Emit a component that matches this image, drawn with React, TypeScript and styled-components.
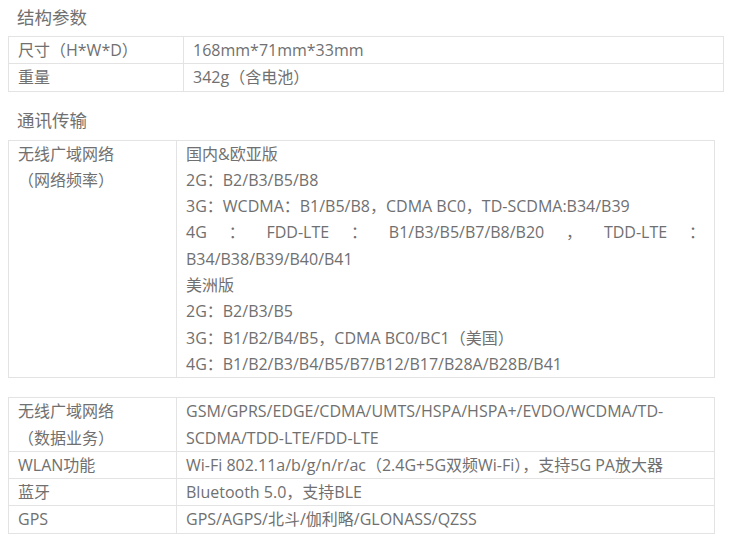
import React from "react";
import styled, { createGlobalStyle } from "styled-components";

const Global = createGlobalStyle`
  html, body { margin: 0; padding: 0; background: #fff; }
  body {
    font-family: "Open Sans", "Noto Sans CJK SC", sans-serif;
    color: #707070;
  }
`;

const Page = styled.div`
  padding: 0 8px 12px 8px;
`;

const SectionTitle = styled.h2<{ $top?: number; $bottom?: number }>`
  margin: ${(p) => p.$top ?? 0}px 0 ${(p) => p.$bottom ?? 0}px 0;
  padding-left: 9px;
  height: 36px;
  line-height: 35px;
  font-size: 17.5px;
  font-weight: 400;
  color: #707070;
`;

const Table = styled.table<{ $width: number; $gap?: number }>`
  width: ${(p) => p.$width}px;
  border-collapse: collapse;
  table-layout: fixed;
  margin-bottom: ${(p) => p.$gap ?? 0}px;
  font-size: 16px;
  line-height: 26.3px;
  color: #707070;
`;

/* $width is the full column width (border to border); padding 9+9 and
   the collapsed border are taken off to get the content width. */
const LabelCell = styled.td<{ $width: number }>`
  width: ${(p) => p.$width - 19}px;
  border: 1px solid #e3e3e3;
  padding: 0 9px;
  vertical-align: top;
  white-space: pre-line;
`;

const ValueCell = styled.td`
  border: 1px solid #e3e3e3;
  padding: 0 9px;
  vertical-align: top;
`;

const Line = styled.div`
  text-align: justify;
`;

export default function App() {
  return (
    <>
      <Global />
      <Page>
        <SectionTitle>结构参数</SectionTitle>
        <Table $width={716}>
          <tbody>
            <tr>
              <LabelCell $width={175}>尺寸（H*W*D）</LabelCell>
              <ValueCell>168mm*71mm*33mm</ValueCell>
            </tr>
            <tr>
              <LabelCell $width={175}>重量</LabelCell>
              <ValueCell>342g（含电池）</ValueCell>
            </tr>
          </tbody>
        </Table>

        <SectionTitle $top={11} $bottom={1}>通讯传输</SectionTitle>
        <Table $width={707} $gap={19}>
          <tbody>
            <tr>
              <LabelCell $width={168}>
                {"无线广域网络\n（网络频率）"}
              </LabelCell>
              <ValueCell>
                <Line>国内&amp;欧亚版</Line>
                <Line>2G：B2/B3/B5/B8</Line>
                <Line>3G：WCDMA：B1/B5/B8，CDMA BC0，TD-SCDMA:B34/B39</Line>
                <Line>4G：FDD-LTE：B1/B3/B5/B7/B8/B20，TDD-LTE：B34/B38/B39/B40/B41</Line>
                <Line>美洲版</Line>
                <Line>2G：B2/B3/B5</Line>
                <Line>3G：B1/B2/B4/B5，CDMA BC0/BC1（美国）</Line>
                <Line>4G：B1/B2/B3/B4/B5/B7/B12/B17/B28A/B28B/B41</Line>
              </ValueCell>
            </tr>
          </tbody>
        </Table>

        <Table $width={707}>
          <tbody>
            <tr>
              <LabelCell $width={168}>
                {"无线广域网络\n（数据业务）"}
              </LabelCell>
              <ValueCell>
                GSM/GPRS/EDGE/CDMA/UMTS/HSPA/HSPA+/EVDO/WCDMA/TD-SCDMA/TDD-LTE/FDD-LTE
              </ValueCell>
            </tr>
            <tr>
              <LabelCell $width={168}>WLAN功能</LabelCell>
              <ValueCell>
                Wi-Fi 802.11a/b/g/n/r/ac（2.4G+5G双频Wi-Fi），支持5G PA放大器
              </ValueCell>
            </tr>
            <tr>
              <LabelCell $width={168}>蓝牙</LabelCell>
              <ValueCell>Bluetooth 5.0，支持BLE</ValueCell>
            </tr>
            <tr>
              <LabelCell $width={168}>GPS</LabelCell>
              <ValueCell>GPS/AGPS/北斗/伽利略/GLONASS/QZSS</ValueCell>
            </tr>
          </tbody>
        </Table>
      </Page>
    </>
  );
}
